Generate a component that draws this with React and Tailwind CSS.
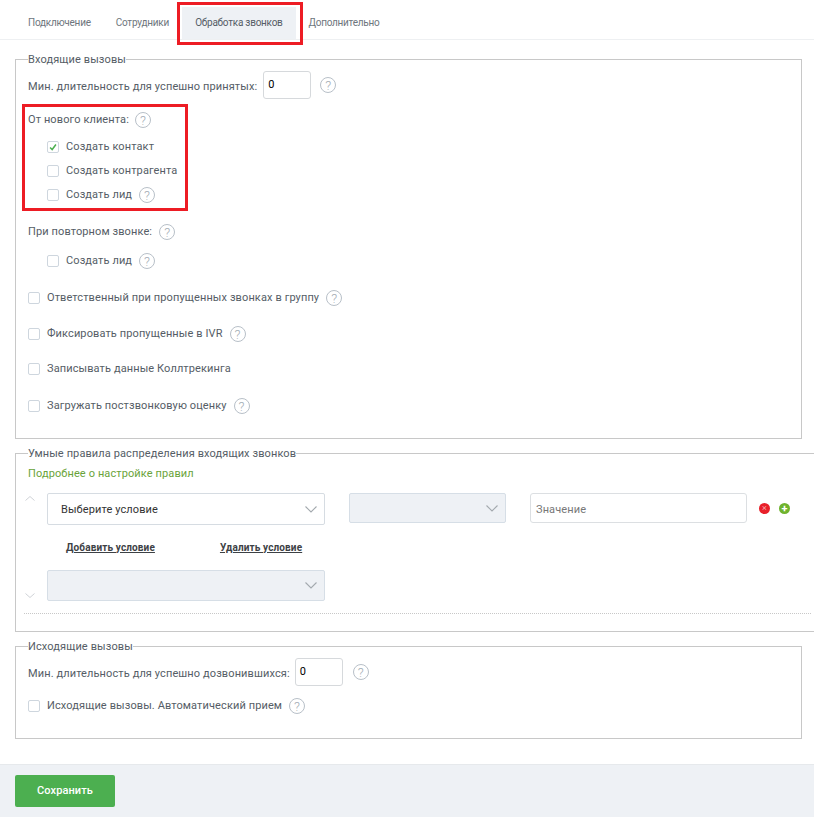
import React from "react";

function Help({ className = "" }) {
  return (
    <span className={"inline-flex h-4 w-4 shrink-0 items-center justify-center rounded-full border border-[#b8c0c8] text-[13px] font-light leading-none text-[#a4adb5] " + className}>
      ?
    </span>
  );
}

function Check({ checked, label, help, className = "" }) {
  return (
    <div className={"flex h-4 items-center " + className}>
      <span className="flex h-3 w-3 shrink-0 items-center justify-center rounded-[2px] border border-[#ced6de] bg-white">
        {checked && (
          <svg viewBox="0 0 12 12" className="h-[10px] w-[10px]">
            <path d="M2.5 6.5 L5 9 L9.5 3" fill="none" stroke="#4caf50" strokeWidth="1.8" />
          </svg>
        )}
      </span>
      <span className="ml-[7px] text-[#555d66]">{label}</span>
      {help && <Help className="ml-[7px]" />}
    </div>
  );
}

function Chevron({ className = "" }) {
  return (
    <svg viewBox="0 0 12 7" className={"h-[7px] w-3 " + className}>
      <path d="M0.5 0.5 L6 6 L11.5 0.5" fill="none" stroke="#a3a9ae" strokeWidth="1.1" />
    </svg>
  );
}

function SmallChevron({ className = "" }) {
  return (
    <svg viewBox="0 0 10 5" className={"h-[5px] w-[10px] " + className}>
      <path d="M0.5 0.5 L5 4.5 L9.5 0.5" fill="none" stroke="#cfd3d7" strokeWidth="1" />
    </svg>
  );
}

function Select({ value, className = "" }) {
  return (
    <div className={"flex items-center justify-between rounded-[2px] border pr-[7px] " + className}>
      <span className="pl-[13px] pt-[2px] text-[#333]">{value}</span>
      <Chevron />
    </div>
  );
}

function Group({ title, className = "", children }) {
  return (
    <fieldset className={"mx-[15px] w-[787px] border border-[#c8c8c8] px-3 " + className}>
      <legend className="pt-[2px] leading-[14px] text-[#555d66]">{title}</legend>
      {children}
    </fieldset>
  );
}

export default function App() {
  const tabs = ["Подключение", "Сотрудники", "Обработка звонков", "Дополнительно"];

  return (
    <div className="relative h-[818px] w-[814px] overflow-hidden bg-white text-[11px] tracking-[0.11px] [font-family:Roboto,sans-serif]">
      {/* Tabs */}
      <div className="flex h-10 items-end border-b border-[#eef0f2] pl-[15.5px] text-[10px] tracking-[-0.25px] text-[#6e767d]">
        {tabs.map((t, i) => (
          <div
            key={t}
            className={
              "flex h-8 items-center whitespace-nowrap pb-[2px] " +
              (i === 2 ? "ml-[0.5px] w-[114px] justify-center bg-[#eef1f5] text-[#555d66]" : "px-[12.5px]")
            }
          >
            {t}
          </div>
        ))}
      </div>

      {/* Incoming */}
      <Group title="Входящие вызовы" className="mt-[11px] h-[388px]">
        <div className="mt-1 flex items-center">
          <span className="pt-1 text-[#555d66]">Мин. длительность для успешно принятых:</span>
          <div className="ml-[6px] flex h-[28px] w-[48px] items-center rounded-[3px] border border-[#d6d9dc] pl-1 text-black">0</div>
          <Help className="ml-[9px]" />
        </div>
        <div className="mt-[13px] flex h-4 items-center text-[#555d66]">
          От нового клиента:
          <Help className="ml-[6px]" />
        </div>
        <Check checked label="Создать контакт" className="ml-[19px] mt-[11px]" />
        <Check label="Создать контрагента" className="ml-[19px] mt-2" />
        <Check label="Создать лид" help className="ml-[19px] mt-2" />
        <div className="mt-[21px] flex h-4 items-center text-[#555d66]">
          При повторном звонке:
          <Help className="ml-[7px]" />
        </div>
        <Check label="Создать лид" help className="ml-[19px] mt-[13px]" />
        <Check label="Ответственный при пропущенных звонках в группу" help className="mt-[21px]" />
        <Check label="Фиксировать пропущенные в IVR" help className="mt-5" />
        <Check label="Записывать данные Коллтрекинга" className="mt-[19px]" />
        <Check label="Загружать постзвонковую оценку" help className="mt-[21px]" />
      </Group>

      {/* Rules */}
      <Group title="Умные правила распределения входящих звонков" className="mt-[6px] h-[187px]">
        <div className="mt-[6px] leading-[14px] text-[#6aa33a]">Подробнее о настройке правил</div>
        <div className="mt-3 flex items-start">
          <SmallChevron className="ml-[-3px] mr-3 mt-[3px] rotate-180" />
          <Select value="Выберите условие" className="h-[32px] w-[278px] border-[#d6dce2] bg-white" />
          <Select className="ml-6 h-[30px] w-[157px] border-[#d6dee6] bg-[#eef1f5]" />
          <div className="ml-6 flex h-[30px] w-[217px] items-center rounded-[3px] border border-[#dcdfe2] pl-[5px] pt-1 text-[#777]">Значение</div>
          <span className="ml-3 mt-[10px] flex h-[11px] w-[11px] items-center justify-center rounded-full bg-[#e8202a] text-[9px] leading-none text-[#f7a5a8]">×</span>
          <span className="ml-[9px] mt-[10px] flex h-[11px] w-[11px] items-center justify-center rounded-full bg-[#6fb32e] text-[11px] font-bold leading-none text-white">+</span>
        </div>
        <div className="ml-[38px] mt-[15px] flex h-[14px] items-center text-[10px] font-bold tracking-[0.13px] text-[#3d4145] underline">
          <span>Добавить условие</span>
          <span className="ml-[65px]">Удалить условие</span>
        </div>
        <div className="mt-4 flex items-end">
          <SmallChevron className="ml-[-3px] mr-3 mb-[3px]" />
          <Select className="h-[31px] w-[278px] border-[#d6dee6] bg-[#eef1f5]" />
        </div>
        <div className="ml-[-4px] mt-3 w-[787px] border-t border-dotted border-[#c8c8c8]" />
      </Group>

      {/* Outgoing */}
      <Group title="Исходящие вызовы" className="mt-[6px] h-[101px]">
        <div className="mt-1 flex items-center">
          <span className="pt-1 text-[#555d66]">Мин. длительность для успешно дозвонившихся:</span>
          <div className="ml-[5px] flex h-[28px] w-[48px] items-center rounded-[3px] border border-[#d6d9dc] pl-1 text-black">0</div>
          <Help className="ml-[10px]" />
        </div>
        <Check label="Исходящие вызовы. Автоматический прием" help className="mt-3" />
      </Group>

      {/* Footer */}
      <div className="mt-[25px] h-[53px] border-t border-[#e6e9ec] bg-[#eef1f5] pl-[15px] pt-[10px]">
        <button className="h-[32px] w-[100px] rounded-[2px] bg-[#4caf50] text-[11px] font-medium text-white">Сохранить</button>
      </div>

      {/* Red highlight frames */}
      <div className="absolute left-[177px] top-[2px] h-[43px] w-[126px] border-[3px] border-[#ed1c24]" />
      <div className="absolute left-[22px] top-[104px] h-[107px] w-[166px] border-[3px] border-[#ed1c24]" />
    </div>
  );
}
